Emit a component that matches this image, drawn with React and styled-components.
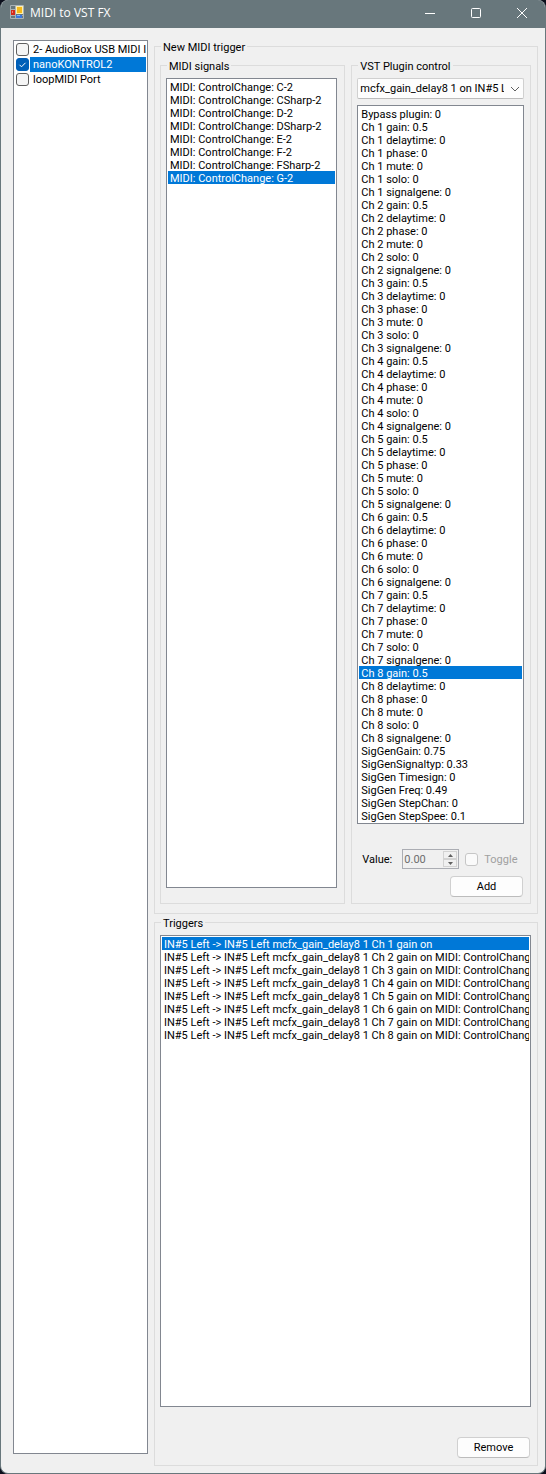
import React from "react";
import styled, { createGlobalStyle } from "styled-components";

const GlobalStyle = createGlobalStyle`
  *, *::before, *::after { box-sizing: border-box; }
  body {
    margin: 0;
    background: #0b0f1c;
    color: #000;
    font: 11px/13px Roboto, "Liberation Sans", Arial, sans-serif;
  }
  button, input, select { font: inherit; color: inherit; margin: 0; }
`;

const Window = styled.div`
  display: flex;
  flex-direction: column;
  min-height: 100vh;
  border: solid #68777c;
  border-width: 0 1px 1px;
  border-radius: 8px;
  background: #f0f0f0;
  overflow: hidden;
`;

const TitleBar = styled.header`
  display: flex;
  align-items: center;
  height: 28px;
  padding: 0 0 3px 9px;
  gap: 5px;
  background: #68777c;
  color: #fff;
`;

const Title = styled.h1`
  flex: 1;
  margin: 0;
  font: 400 12px/16px "Open Sans", sans-serif;
`;

const CaptionButton = styled.button`
  display: grid;
  place-items: center;
  width: 46px;
  height: 24px;
  padding: 0;
  border: 0;
  background: transparent;
  color: #fff;
`;

const CaptionButtons = styled.div`
  display: flex;
`;

const Client = styled.main`
  flex: 1;
  display: flex;
  gap: 6px;
  padding: 12px 7px 7px 12px;
`;

const ListFrame = styled.ul`
  flex: ${(p) => (p.$grow ? 1 : "none")};
  min-width: 0;
  margin: 0;
  padding: 1px;
  list-style: none;
  background: #fff;
  border: 1px solid #828790;
  overflow: hidden;
`;

const DeviceList = styled(ListFrame)`
  width: 135px;
  margin-bottom: 12px;
`;

const Device = styled.label`
  display: flex;
  align-items: center;
  height: 15px;
  gap: 1px;
  padding-left: 1px;
`;

const DeviceName = styled.span`
  flex: 1;
  min-width: 0;
  padding-left: 3px;
  line-height: 15px;
  white-space: nowrap;
  overflow: hidden;
  background: ${(p) => (p.$selected ? "#0078d7" : "transparent")};
  color: ${(p) => (p.$selected ? "#fff" : "#000")};
`;

const CheckBox = styled.input`
  appearance: none;
  flex: none;
  width: 13px;
  height: 13px;
  border: 1px solid #5f5f5f;
  border-radius: 3px;
  background: #f5f5f5;

  &:checked {
    border-color: #005fb8;
    background: #005fb8
      url("data:image/svg+xml,%3Csvg xmlns='http://www.w3.org/2000/svg' viewBox='0 0 11 11'%3E%3Cpath d='M2.5 5.8l2 2 4-4' fill='none' stroke='white'/%3E%3C/svg%3E");
  }

  &:disabled {
    border-color: #c6c6c6;
    background: #fafafa;
  }
`;

const Panels = styled.div`
  flex: 1;
  min-width: 0;
  display: flex;
  flex-direction: column;
  gap: 2px;
`;

const Group = styled.fieldset`
  display: flex;
  flex-direction: column;
  flex: ${(p) => p.$flex || "none"};
  min-width: 0;
  margin: 0;
  padding: ${(p) => p.$padding};
  border: 1px solid #dcdcdc;
`;

const Legend = styled.legend`
  margin-left: 1px;
  padding: 0 2px;
  height: 13px;
  line-height: 15px;
`;

const Columns = styled.div`
  display: flex;
  gap: 6px;
`;

const Option = styled.li`
  height: 13px;
  padding-left: 2px;
  line-height: 15px;
  white-space: pre;
  overflow: hidden;
  background: ${(p) => (p.$selected ? "#0078d7" : "transparent")};
  color: ${(p) => (p.$selected ? "#fff" : "#000")};
`;

const ComboBox = styled.div`
  display: grid;
  align-items: center;
  margin-bottom: 6px;

  > * { grid-area: 1 / 1; }
  > svg { justify-self: end; margin-right: 4px; pointer-events: none; }
`;

const Select = styled.select`
  appearance: none;
  width: 100%;
  min-width: 0;
  height: 21px;
  padding: 0 19px 0 2px;
  border: 1px solid #d0d0d0;
  border-bottom-color: #bcbcbc;
  border-radius: 2px;
  background: #fdfdfd;
`;

const ValueRow = styled.div`
  display: flex;
  align-items: center;
  margin: 25px 0 7px;
  padding-left: 5px;
`;

const ValueLabel = styled.label`
  width: 40px;
`;

const Spinner = styled.div`
  display: flex;
  width: 57px;
  height: 20px;
  margin-right: 6px;
  padding: 1px;
  border: 1px solid #abadb3;
`;

const SpinnerInput = styled.input`
  flex: 1;
  min-width: 0;
  padding: 0;
  border: 0;
  background: transparent;
  color: #6d6d6d;
`;

const SpinnerArrows = styled.div`
  display: flex;
  flex-direction: column;
  width: 14px;
`;

const ArrowButton = styled.button`
  flex: 1;
  display: grid;
  place-items: center;
  min-height: 0;
  padding: 0;
  border: 1px solid #d2d2d2;
  background: #f0f0f0;
`;

const ToggleLabel = styled.label`
  display: flex;
  align-items: center;
  gap: 6px;
  color: #a0a0a0;
`;

const PushButton = styled.button`
  align-self: flex-end;
  width: 73px;
  height: 21px;
  margin: ${(p) => p.$top || 0}px 1px 0 0;
  padding: 0;
  border: 1px solid #d0d0d0;
  border-bottom-color: #bcbcbc;
  border-radius: 4px;
  background: #fdfdfd;
`;

const notes = ["C-2", "CSharp-2", "D-2", "DSharp-2", "E-2", "F-2", "FSharp-2", "G-2"];
const channels = [1, 2, 3, 4, 5, 6, 7, 8];
const signals = notes.map((n) => `MIDI: ControlChange: ${n}`);
const parameters = [
  "Bypass plugin: 0",
  ...channels.flatMap((c) => [
    `Ch ${c} gain: 0.5`,
    `Ch ${c} delaytime: 0`,
    `Ch ${c} phase: 0`,
    `Ch ${c} mute: 0`,
    `Ch ${c} solo: 0`,
    `Ch ${c} signalgene: 0`,
  ]),
  "SigGenGain: 0.75",
  "SigGenSignaltyp: 0.33",
  "SigGen Timesign: 0",
  "SigGen Freq: 0.49",
  "SigGen StepChan: 0",
  "SigGen StepSpee: 0.1",
];
const triggers = channels.map(
  (c) => `IN#5 Left -> IN#5 Left mcfx_gain_delay8 1 Ch ${c} gain on${c > 1 ? " MIDI: ControlChange" : ""}`
);

function ListBox({ label, items, selected, grow }) {
  return (
    <ListFrame role="listbox" aria-label={label} $grow={grow}>
      {items.map((item) => (
        <Option key={item} role="option" aria-selected={item === selected} $selected={item === selected}>
          {item}
        </Option>
      ))}
    </ListFrame>
  );
}

function AppIcon() {
  return (
    <svg width="15" height="15" viewBox="0 0 15 15" aria-hidden="true">
      <path d="M.5.5h13v13H.5zM.5 4.5h5M5.5.5v13M.5 10.5h13" fill="none" stroke="#a9b2b6" />
      <rect x="6.500" y="1.500" width="6" height="7" fill="#f5b91a" stroke="#fff0b0" />
      <rect x="1" y="5" width="4" height="5" fill="#d42a1c" />
      <rect x="2" y="6" width="1" height="2" fill="#f08070" />
      <rect x="6" y="10" width="6" height="3" fill="#3a78e0" />
      <rect x="7" y="10" width="3" height="1" fill="#8ab4f4" />
    </svg>
  );
}

function Arrow({ down }) {
  return (
    <svg width="5" height="3" viewBox="0 0 5 3" aria-hidden="true">
      <path d={down ? "M0 0h5L2.500 3z" : "M0 3h5L2.500 0z"} fill="#606060" />
    </svg>
  );
}

export default function App() {
  return (
    <>
      <GlobalStyle />
      <Window>
        <TitleBar>
          <AppIcon />
          <Title>MIDI to VST FX</Title>
          <CaptionButtons>
            <CaptionButton aria-label="Minimize">
              <svg width="10" height="10" viewBox="0 0 10 10"><path d="M0 5.500h10" stroke="currentColor" /></svg>
            </CaptionButton>
            <CaptionButton aria-label="Maximize">
              <svg width="10" height="10" viewBox="0 0 10 10"><rect x=".5" y=".5" width="9" height="9" rx="1" fill="none" stroke="currentColor" /></svg>
            </CaptionButton>
            <CaptionButton aria-label="Close">
              <svg width="10" height="10" viewBox="0 0 10 10"><path d="M0 0l10 10M10 0L0 10" stroke="currentColor" /></svg>
            </CaptionButton>
          </CaptionButtons>
        </TitleBar>
        <Client>
          <DeviceList aria-label="MIDI devices">
            {["2- AudioBox USB MIDI Interface", "nanoKONTROL2", "loopMIDI Port"].map((name, i) => (
              <li key={name}>
                <Device>
                  <CheckBox type="checkbox" defaultChecked={i === 1} />
                  <DeviceName $selected={i === 1}>{name}</DeviceName>
                </Device>
              </li>
            ))}
          </DeviceList>
          <Panels>
            <Group $padding="6px 6px 9px 5px">
              <Legend>New MIDI trigger</Legend>
              <Columns>
                <Group $flex="185 1 0" $padding="6px 7px 15px 5px">
                  <Legend>MIDI signals</Legend>
                  <ListBox label="MIDI signals" items={signals} selected={signals[7]} grow />
                </Group>
                <Group $flex="180 1 0" $padding="6px 6px 6px 5px">
                  <Legend>VST Plugin control</Legend>
                  <ComboBox>
                    <Select aria-label="Plugin">
                      <option>mcfx_gain_delay8 1 on IN#5 Left</option>
                    </Select>
                    <svg width="10" height="6" viewBox="0 0 10 6" aria-hidden="true">
                      <path d="M1 1l4 4 4-4" fill="none" stroke="#606060" />
                    </svg>
                  </ComboBox>
                  <ListBox label="Plugin parameters" items={parameters} selected="Ch 8 gain: 0.5" />
                  <ValueRow>
                    <ValueLabel htmlFor="value">Value:</ValueLabel>
                    <Spinner>
                      <SpinnerInput id="value" defaultValue="0.00" disabled />
                      <SpinnerArrows>
                        <ArrowButton aria-label="Increase" disabled><Arrow /></ArrowButton>
                        <ArrowButton aria-label="Decrease" disabled><Arrow down /></ArrowButton>
                      </SpinnerArrows>
                    </Spinner>
                    <ToggleLabel>
                      <CheckBox type="checkbox" disabled />
                      Toggle
                    </ToggleLabel>
                  </ValueRow>
                  <PushButton>Add</PushButton>
                </Group>
              </Columns>
            </Group>
            <Group $flex="1" $padding="6px 6px 7px 5px">
              <Legend>Triggers</Legend>
              <ListBox label="Triggers" items={triggers} selected={triggers[0]} grow />
              <PushButton $top={30}>Remove</PushButton>
            </Group>
          </Panels>
        </Client>
      </Window>
    </>
  );
}
